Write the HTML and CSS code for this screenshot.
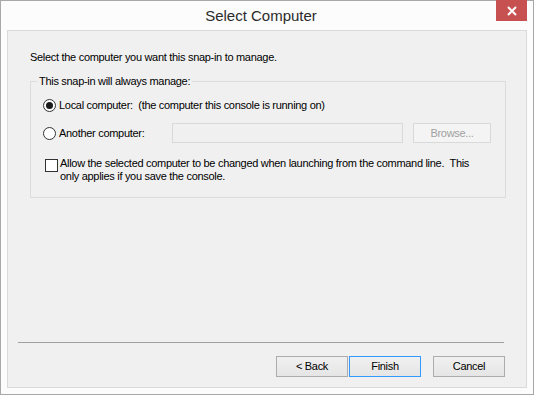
FILE: index.html
```html
<!DOCTYPE html>
<html>
<head>
<meta charset="utf-8">
<link rel="stylesheet" href="styles.css">
</head>
<body>
<div class="window">
  <div class="titlebar">
    <span class="title">Select Computer</span>
    <div class="close">
      <svg width="10" height="10" viewBox="0 0 10 10"><path d="M1 1 L9 9 M9 1 L1 9" stroke="#fff" stroke-width="2" fill="none"/></svg>
    </div>
  </div>
  <div class="client">
    <p class="intro">Select the computer you want this snap-in to manage.</p>
    <fieldset class="group">
      <legend>This snap-in will always manage:</legend>
      <div class="row row-local">
        <span class="radio checked"></span>
        <span class="label">Local computer:&nbsp; (the computer this console is running on)</span>
      </div>
      <div class="row row-another">
        <span class="radio"></span>
        <span class="label another-label">Another computer:</span>
        <span class="textbox"></span>
        <span class="btn disabled browse">Browse...</span>
      </div>
      <div class="row row-check">
        <span class="checkbox"></span>
        <span class="label">Allow the selected computer to be changed when launching from the command line.&nbsp; This<br>only applies if you save the console.</span>
      </div>
    </fieldset>
    <div class="footer">
      <div class="separator"></div>
      <div class="buttons">
        <span class="btn">&lt; Back</span>
        <span class="btn default">Finish</span>
        <span class="btn cancel">Cancel</span>
      </div>
    </div>
  </div>
</div>
</body>
</html>
```

FILE: styles.css
```css
* { box-sizing: border-box; }
html, body { margin: 0; padding: 0; }
body {
  font-family: "Liberation Sans", Arial, sans-serif;
  font-size: 11px;
  line-height: 13px;
  letter-spacing: -0.3px;
  color: #000;
  background: #fff;
}
.window {
  width: 534px;
  height: 395px;
  border: 1px solid #a8a8a8;
  background: #fcfcfc;
  display: flex;
  flex-direction: column;
}
.titlebar {
  position: relative;
  height: 29px;
  flex: none;
  display: flex;
  align-items: center;
  justify-content: center;
  padding-right: 12px;
  padding-top: 1px;
}
.title {
  font-size: 15px;
  line-height: 18px;
  letter-spacing: 0;
  color: #2b2b2b;
}
.close {
  position: absolute;
  top: -1px;
  right: 6px;
  width: 31px;
  height: 21px;
  background: #c75050;
  display: flex;
  align-items: center;
  justify-content: center;
}
.client {
  flex: 1;
  margin: 0 6px 6px 6px;
  border: 1px solid #dadada;
  background: #f0f0f0;
  display: flex;
  flex-direction: column;
}
.intro {
  margin: 20px 0 0 22px;
}
.group {
  margin: 11px 20px 0 22px;
  padding: 11px 0 14px 0;
  border: 1px solid #dcdcdc;
  min-width: 0;
}
.group legend {
  margin-left: 6px;
  padding: 0 2px;
}
.row {
  display: flex;
  align-items: center;
  padding-left: 12px;
}
.row-local { height: 13px; }
.row-another { height: 20px; margin-top: 11px; }
.row-check { margin-top: 14px; align-items: flex-start; padding-left: 14px; }
.radio {
  width: 13px;
  height: 13px;
  border: 1px solid #333;
  border-radius: 50%;
  background: #fff;
  flex: none;
  margin-right: 3px;
  display: flex;
  align-items: center;
  justify-content: center;
}
.radio.checked::after {
  content: "";
  width: 7px;
  height: 7px;
  border-radius: 50%;
  background: #1a1a1a;
}
.another-label { width: 113px; flex: none; }
.textbox {
  width: 231px;
  height: 20px;
  border: 1px solid #d9d9d9;
  background: #f0f0f0;
  flex: none;
}
.checkbox {
  width: 13px;
  height: 13px;
  border: 1px solid #333;
  background: #fff;
  flex: none;
  margin-top: 2px;
  margin-right: 2px;
}
.btn {
  width: 72px;
  height: 21px;
  border: 1px solid #acacac;
  background: linear-gradient(#f0f0f0, #e5e5e5);
  display: flex;
  align-items: center;
  justify-content: center;
  flex: none;
}
.btn.default { border-color: #3399ff; margin-left: 1px; }
.btn.cancel { margin-left: 12px; }
.btn.disabled {
  color: #a0a0a0;
  border-color: #d9d9d9;
  background: #f4f4f4;
}
.browse { width: 78px; height: 20px; margin-left: 10px; }
.footer {
  margin-top: auto;
  padding-bottom: 10px;
}
.separator {
  height: 1px;
  background: #a0a0a0;
  margin: 0 22px 0 10px;
}
.buttons {
  display: flex;
  justify-content: flex-end;
  padding-right: 21px;
  margin-top: 13px;
}
```
